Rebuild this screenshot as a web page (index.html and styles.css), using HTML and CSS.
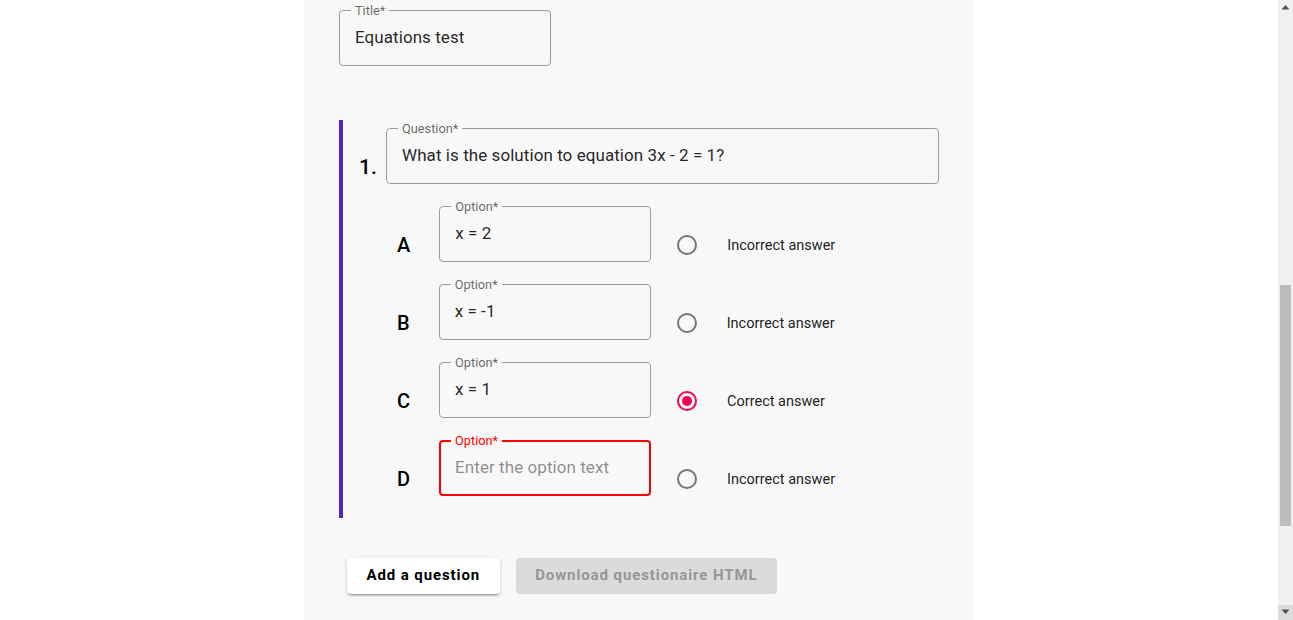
FILE: index.html
```html
<!DOCTYPE html>
<html lang="en">
<head>
<meta charset="utf-8">
<title>Questionnaire editor</title>
<link rel="stylesheet" href="styles.css">
</head>
<body>
<div class="viewport">
<main class="page">
  <div class="field field-title">
    <span class="field-label">Title*</span>
    <input class="field-input" type="text" value="Equations test">
  </div>

  <section class="question">
    <div class="question-row">
      <span class="question-num">1.</span>
      <div class="field field-question">
        <span class="field-label">Question*</span>
        <input class="field-input" type="text" value="What is the solution to equation 3x - 2 = 1?">
      </div>
    </div>

    <div class="option-row">
      <span class="option-letter">A</span>
      <div class="field field-option">
        <span class="field-label">Option*</span>
        <input class="field-input" type="text" value="x = 2">
      </div>
      <label class="answer">
        <svg class="radio" viewBox="0 0 24 24" width="24" height="24"><circle cx="12" cy="12" r="9" fill="none" stroke="currentColor" stroke-width="2"/></svg>
        <span class="answer-text">Incorrect answer</span>
      </label>
    </div>

    <div class="option-row">
      <span class="option-letter">B</span>
      <div class="field field-option">
        <span class="field-label">Option*</span>
        <input class="field-input" type="text" value="x = -1">
      </div>
      <label class="answer">
        <svg class="radio" viewBox="0 0 24 24" width="24" height="24"><circle cx="12" cy="12" r="9" fill="none" stroke="currentColor" stroke-width="2"/></svg>
        <span class="answer-text">Incorrect answer</span>
      </label>
    </div>

    <div class="option-row">
      <span class="option-letter">C</span>
      <div class="field field-option">
        <span class="field-label">Option*</span>
        <input class="field-input" type="text" value="x = 1">
      </div>
      <label class="answer">
        <svg class="radio radio-checked" viewBox="0 0 24 24" width="24" height="24"><circle cx="12" cy="12" r="9" fill="none" stroke="currentColor" stroke-width="2"/><circle cx="12" cy="12" r="5" fill="currentColor"/></svg>
        <span class="answer-text">Correct answer</span>
      </label>
    </div>

    <div class="option-row">
      <span class="option-letter">D</span>
      <div class="field field-option field-error">
        <span class="field-label">Option*</span>
        <input class="field-input" type="text" placeholder="Enter the option text">
      </div>
      <label class="answer">
        <svg class="radio" viewBox="0 0 24 24" width="24" height="24"><circle cx="12" cy="12" r="9" fill="none" stroke="currentColor" stroke-width="2"/></svg>
        <span class="answer-text">Incorrect answer</span>
      </label>
    </div>
  </section>

  <div class="actions">
    <button class="btn btn-raised" type="button">Add a question</button>
    <button class="btn btn-disabled" type="button" disabled>Download questionaire HTML</button>
  </div>
</main>
</div>
<div class="scrollbar" aria-hidden="true">
  <div class="sb-button">
    <svg viewBox="0 0 15 15" width="15" height="15"><polygon points="3.5,9.5 11.5,9.5 7.5,5" fill="#505050"/></svg>
  </div>
  <div class="sb-track"><div class="sb-thumb"></div></div>
  <div class="sb-button sb-button-active">
    <svg viewBox="0 0 15 15" width="15" height="15"><polygon points="3.5,4.5 11.5,4.5 7.5,9" fill="#505050"/></svg>
  </div>
</div>
</body>
</html>
```

FILE: styles.css
```css
html, body {
  margin: 0;
  padding: 0;
  height: 100%;
  overflow: hidden;
  background: #ffffff;
}

body {
  display: flex;
  font-family: Roboto, "Liberation Sans", Arial, sans-serif;
  color: rgba(0, 0, 0, 0.87);
}

.viewport {
  flex: 1;
  min-width: 0;
  height: 100%;
  overflow: hidden;
}

.page {
  width: 668px;
  min-height: 100%;
  box-sizing: border-box;
  margin: 0 auto;
  padding: 10px 34px 40px;
  background: #f8f8f8;
  box-shadow: 0 0 2px rgba(0, 0, 0, 0.07);
}

.field {
  position: relative;
  box-sizing: border-box;
  height: 56px;
  border: 1px solid #9c9c9c;
  border-radius: 4px;
  padding: 0 15px 2px;
  display: flex;
  align-items: center;
}

.field-label {
  position: absolute;
  top: -7px;
  left: 11px;
  padding: 0 4px;
  font-size: 12.75px;
  line-height: 13px;
  color: rgba(0, 0, 0, 0.6);
  background: #f8f8f8;
}

.field-input {
  flex: 1;
  min-width: 0;
  border: none;
  outline: none;
  background: transparent;
  padding: 0;
  margin: 0;
  font-family: Roboto, "Liberation Sans", Arial, sans-serif;
  font-size: 17px;
  letter-spacing: 0.004em;
  color: rgba(0, 0, 0, 0.87);
}

.field-input::placeholder {
  color: rgba(0, 0, 0, 0.45);
}

.field-title {
  width: 212px;
  margin-bottom: 54px;
}

.question {
  border-left: 4px solid #5224c2;
  padding: 8px 0 0 16px;
}

.question-row {
  height: 78px;
  display: flex;
  align-items: center;
}

.question-num {
  width: 27px;
  font-size: 21px;
  font-weight: 500;
  color: #000;
}

.field-question {
  flex: 1;
  align-self: flex-start;
}

.option-row {
  height: 78px;
  display: flex;
  align-items: center;
  padding-left: 38px;
}

.option-letter {
  font-size: 20px;
  font-weight: 500;
  color: #000;
  margin-right: 29px;
}

.field-option {
  width: 212px;
  align-self: flex-start;
}

.field-error {
  border: 2px solid #ff0000;
  padding: 0 14px 2px;
}

.field-error .field-label {
  top: -8px;
  left: 10px;
  color: #ff0000;
}

.answer {
  display: flex;
  align-items: center;
  margin-left: 24px;
}

.radio {
  display: block;
  color: #757575;
}

.radio-checked {
  color: #f50057;
}

.answer-text {
  margin-left: 28px;
  font-size: 14.5px;
  color: rgba(0, 0, 0, 0.9);
}

.actions {
  display: flex;
  gap: 16px;
  margin-top: 40px;
  padding-left: 8px;
}

.btn {
  height: 36px;
  border: none;
  border-radius: 4px;
  padding: 0 19.5px 2px;
  font-family: Roboto, "Liberation Sans", Arial, sans-serif;
  font-size: 15px;
  font-weight: 700;
  letter-spacing: 0.06em;
}

.btn-raised {
  background: #ffffff;
  color: #000;
  box-shadow: 0 3px 1px -2px rgba(0, 0, 0, 0.2), 0 2px 2px 0 rgba(0, 0, 0, 0.14), 0 1px 5px 0 rgba(0, 0, 0, 0.12);
}

.btn-disabled {
  background: #dbdbdb;
  color: #969696;
}

.scrollbar {
  width: 15px;
  flex: none;
  height: 100%;
  display: flex;
  flex-direction: column;
  background: #f1f1f1;
}

.sb-button {
  height: 15px;
  flex: none;
}

.sb-button svg {
  display: block;
}

.sb-button-active {
  background: #dcdcdc;
}

.sb-track {
  flex: 1;
  padding: 270px 2px 0;
}

.sb-thumb {
  height: 241px;
  background: #bdbdbd;
}
```
